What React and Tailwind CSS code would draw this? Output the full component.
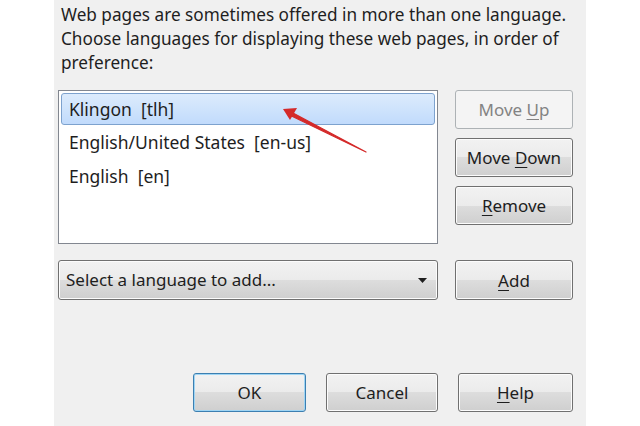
const FONT = "font-['Noto_Sans','Open_Sans',sans-serif]";

function WinButton({ children, disabled, primary, className = '' }) {
  const base = 'flex items-center justify-center rounded-[3px] border text-[17px] leading-none';
  const look = disabled
    ? 'border-[#adb2b5] bg-[#f4f4f4] text-[#838383]'
    : primary
      ? 'border-[#3c7fb1] bg-[linear-gradient(#f2f2f2_0%,#ebebeb_50%,#dddddd_50%,#cfcfcf_100%)] text-[#1e1e1e] shadow-[inset_0_0_0_1px_#9fd5f4]'
      : 'border-[#707070] bg-[linear-gradient(#f2f2f2_0%,#ebebeb_50%,#dddddd_50%,#cfcfcf_100%)] text-[#1e1e1e] shadow-[inset_0_0_0_1px_#fcfcfc]';
  return (
    <div className={`${base} ${look} ${className}`}>
      <span>{children}</span>
    </div>
  );
}

const U = ({ children }) => <span className="underline underline-offset-[3px] decoration-1">{children}</span>;

export default function App() {
  return (
    <div className={`w-[640px] h-[426px] bg-white flex justify-center ${FONT}`}>
      <div className="w-[532px] h-full bg-[#f0f0f0] pl-[4px] pt-[3px] flex flex-col">
        <p className="pl-[3px] text-[17.2px] leading-[24px] text-[#1e1e1e] whitespace-nowrap">
          Web pages are sometimes offered in more than one language.<br />
          Choose languages for displaying these web pages, in order of<br />
          preference:
        </p>

        <div className="mt-[15px] flex gap-[17px]">
          <div className="w-[380px] h-[154px] border border-[#828790] bg-white p-[2px] flex flex-col text-[17.5px] text-[#1e1e1e]">
            <div className="h-[32px] rounded-[3px] border border-[#7da2ce] bg-[linear-gradient(#dcebfc,#c1dbfc)] pl-[7px] flex items-center">
              Klingon&nbsp;&nbsp;[tlh]
            </div>
            <div className="h-[34px] pl-[8px] flex items-center">English/United States&nbsp;&nbsp;[en-us]</div>
            <div className="h-[34px] pl-[8px] flex items-center">English&nbsp;&nbsp;[en]</div>
          </div>
          <div className="w-[118px] flex flex-col gap-[9px]">
            <WinButton disabled className="h-[39px]">Move <U>U</U>p</WinButton>
            <WinButton className="h-[39px]">Move <U>D</U>own</WinButton>
            <WinButton className="h-[39px]"><U>R</U>emove</WinButton>
          </div>
        </div>

        <div className="mt-[16px] flex gap-[17px]">
          <div className="w-[380px] h-[40px] rounded-[3px] border border-[#707070] bg-[linear-gradient(#f2f2f2_0%,#ebebeb_50%,#dddddd_50%,#cfcfcf_100%)] shadow-[inset_0_0_0_1px_#fcfcfc] flex items-center pl-[7px] pr-[10px] text-[17px] text-[#1e1e1e]">
            <span className="flex-1">Select a language to add...</span>
            <svg width="9" height="5" viewBox="0 0 9 5"><path d="M0 0h9L4.5 5z" fill="#1e1e1e" /></svg>
          </div>
          <WinButton className="w-[118px] h-[40px]"><U>A</U>dd</WinButton>
        </div>

        <div className="mt-[73px] pr-[13px] flex justify-end gap-[20px]">
          <WinButton primary className="w-[113px] h-[39px]">OK</WinButton>
          <WinButton className="w-[112px] h-[39px]">Cancel</WinButton>
          <WinButton className="w-[115px] h-[39px]"><U>H</U>elp</WinButton>
        </div>
      </div>

      <svg className="absolute left-0 top-0 pointer-events-none" width="640" height="426">
        <path d="M366 152 L293 113 L291.5 116 Z" fill="#d42a2a" stroke="#d42a2a" strokeWidth="1.2" strokeLinejoin="round" />
        <path d="M283 109 L297 108 L290 120 Z" fill="#d42a2a" />
      </svg>
    </div>
  );
}
